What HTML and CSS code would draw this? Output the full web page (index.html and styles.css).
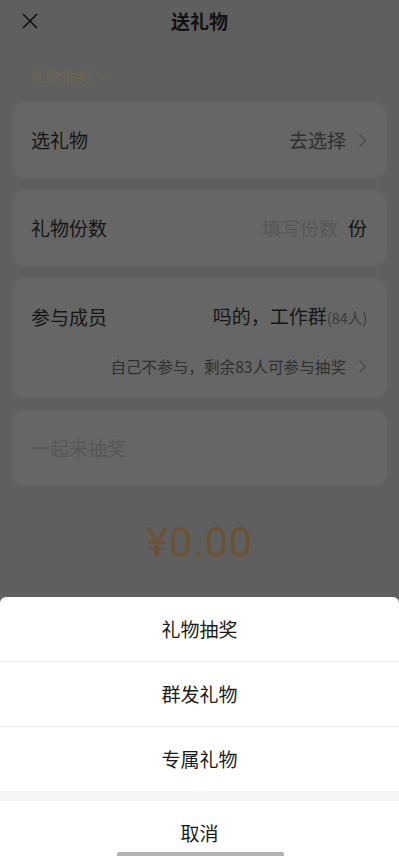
FILE: index.html
```html
<!DOCTYPE html>
<html lang="zh-CN">
<head>
<meta charset="utf-8">
<title>送礼物</title>
<link rel="stylesheet" href="styles.css">
</head>
<body>
<div class="page">
  <header class="nav">
    <svg class="close" width="18" height="18" viewBox="0 0 18 18"><path d="M2 2 L16 16 M16 2 L2 16" stroke="#111" stroke-width="1.6" fill="none"/></svg>
    <h1 class="title">送礼物</h1>
  </header>
  <main class="content">
    <div class="mode">礼物抽奖
      <svg class="mode-arrow" width="12" height="8" viewBox="0 0 12 8"><path d="M1 1.5 L6 6 L11 1.5" stroke="#6e6452" stroke-width="1.3" fill="none"/></svg>
    </div>
    <section class="card row">
      <span class="label">选礼物</span>
      <span class="value muted">去选择
        <svg class="chev" width="9" height="15" viewBox="0 0 9 15"><path d="M1.5 1.5 L7.5 7.5 L1.5 13.5" stroke="#4a4a4a" stroke-width="1.3" fill="none"/></svg>
      </span>
    </section>
    <section class="card row">
      <span class="label">礼物份数</span>
      <span class="value"><span class="placeholder">填写份数</span><span class="unit">份</span></span>
    </section>
    <section class="card members">
      <div class="members-top">
        <span class="label">参与成员</span>
        <span class="group">吗的，工作群<span class="count">(84人)</span></span>
      </div>
      <div class="members-note">自己不参与，剩余83人可参与抽奖
        <svg class="chev" width="9" height="15" viewBox="0 0 9 15"><path d="M1.5 1.5 L7.5 7.5 L1.5 13.5" stroke="#4a4a4a" stroke-width="1.3" fill="none"/></svg>
      </div>
    </section>
    <section class="card row">
      <span class="placeholder">一起来抽奖</span>
    </section>
    <div class="amount">¥0.00</div>
  </main>
  <div class="sheet">
    <div class="sheet-item">礼物抽奖</div>
    <div class="sheet-item divided">群发礼物</div>
    <div class="sheet-item divided">专属礼物</div>
    <div class="sheet-gap"></div>
    <div class="sheet-cancel">取消</div>
    <div class="home-bar"></div>
  </div>
</div>
</body>
</html>
```
FILE: styles.css
```css
* { box-sizing: border-box; margin: 0; padding: 0; }
html, body {
  width: 399px;
  height: 856px;
  overflow: hidden;
}
body {
  background: #5f5f5f;
  font-family: "Noto Sans CJK SC", "Noto Sans", sans-serif;
  color: #151515;
}
.page {
  position: relative;
  width: 399px;
  height: 856px;
}
.nav {
  height: 42px;
  display: flex;
  align-items: center;
  justify-content: center;
  position: relative;
}
.close {
  position: absolute;
  left: 21px;
  top: 12px;
}
.title {
  font-size: 19px;
  font-weight: 700;
  line-height: 42px;
  color: #121212;
}
.content {
  padding: 0 12px;
  display: flex;
  flex-direction: column;
}
.mode {
  margin: 23px 0 15px 19px;
  height: 22px;
  line-height: 22px;
  font-size: 15px;
  color: #6e6452;
  display: flex;
  align-items: center;
  gap: 5px;
}
.mode-arrow { margin-top: 1px; }
.card {
  background: #666666;
  border-radius: 12px;
  margin-bottom: 12px;
  padding: 0 20px 0 19px;
}
.row {
  height: 76px;
  display: flex;
  align-items: center;
  justify-content: space-between;
}
.label {
  font-size: 19px;
  line-height: 26px;
  color: #151515;
}
.value {
  display: flex;
  align-items: center;
  font-size: 19px;
  line-height: 26px;
}
.muted { color: #2f2f2f; }
.chev { margin-left: 12px; }
.placeholder {
  font-size: 19px;
  line-height: 26px;
  color: #575757;
}
.unit {
  margin-left: 10px;
  color: #141414;
}
.members {
  padding-top: 26px;
  padding-bottom: 21px;
}
.members-top {
  display: flex;
  justify-content: space-between;
  align-items: center;
  height: 26px;
}
.group {
  font-size: 19px;
  line-height: 26px;
  color: #161616;
  display: flex;
  align-items: baseline;
}
.count {
  font-size: 15px;
  color: #3c3c3c;
  letter-spacing: -0.3px;
}
.members-note {
  margin-top: 25px;
  height: 22px;
  line-height: 22px;
  font-size: 15.6px;
  color: #2f2f2f;
  display: flex;
  justify-content: flex-end;
  align-items: center;
}
.amount {
  margin-top: 20px;
  text-align: center;
  font-family: Roboto, "Noto Sans", sans-serif;
  font-size: 42px;
  line-height: 50px;
  color: #6a5334;
  letter-spacing: 0.5px;
}
.sheet {
  position: absolute;
  left: 0;
  right: 0;
  bottom: 0;
  height: 259px;
  background: #ffffff;
  border-radius: 6px 6px 0 0;
  display: flex;
  flex-direction: column;
}
.sheet-item {
  height: 64px;
  line-height: 64px;
  text-align: center;
  font-size: 19px;
  color: #1a1a1a;
}
.sheet-item.divided {
  height: 65px;
  border-top: 1px solid #ececec;
}
.sheet-gap {
  height: 10px;
  background: #f6f6f6;
}
.sheet-cancel {
  padding-top: 10px;
  line-height: 44px;
  text-align: center;
  font-size: 19px;
  color: #1a1a1a;
}
.home-bar {
  position: absolute;
  left: 117px;
  bottom: 0;
  width: 167px;
  height: 4px;
  border-radius: 2px 2px 0 0;
  background: #b4b4b4;
}
```
